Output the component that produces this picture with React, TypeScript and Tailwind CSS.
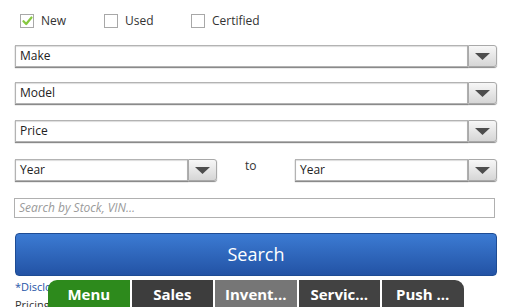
import React from "react";

type CheckProps = { label: string; checked?: boolean; width: string };

function CheckOption({ label, checked, width }: CheckProps) {
  return (
    <div className={`flex items-center ${width}`}>
      <span className="flex h-[14px] w-[14px] items-center justify-center border border-[#a8a8a8] bg-white">
        {checked && (
          <svg width="11" height="10" viewBox="0 0 11 10">
            <path d="M1.5 5.2 L4.2 8 L9.5 1.5" fill="none" stroke="#86c83f" strokeWidth="2.2" strokeLinecap="round" strokeLinejoin="round" />
          </svg>
        )}
      </span>
      <span className="ml-[7px] text-[12px] leading-none text-[#333]">{label}</span>
    </div>
  );
}

function ArrowButton() {
  return (
    <div className="flex h-[22px] w-[29px] shrink-0 items-center justify-center rounded-r-[3px] border border-[#a9a9a9] bg-gradient-to-b from-[#f7f7f7] to-[#d6d6d6] shadow-[0_1px_1px_#8a8a8a]">
      <svg width="15" height="7" viewBox="0 0 15 7">
        <path d="M0 0 H15 L7.5 7 Z" fill="#4d4d4d" />
      </svg>
    </div>
  );
}

function SelectBox({ label, className }: { label: string; className: string }) {
  return (
    <div className={`flex ${className}`}>
      <div className="flex h-[22px] flex-1 items-center border border-[#b3b3b3] bg-white pl-[4px] text-[12px] text-[#222] shadow-[0_1px_1px_#8a8a8a,inset_0_1px_1px_#dcdcdc]">
        {label}
      </div>
      <ArrowButton />
    </div>
  );
}

const tabs = [
  { name: "Menu", bg: "bg-[#2d8a1c]", round: "rounded-tl-[9px]" },
  { name: "Sales", bg: "bg-[#3d3d3d]", round: "" },
  { name: "Invent...", bg: "bg-[#767676]", round: "" },
  { name: "Servic...", bg: "bg-[#424242]", round: "" },
  { name: "Push ...", bg: "bg-[#424242]", round: "rounded-tr-[9px]" },
];

export default function App() {
  return (
    <div className="relative h-[307px] w-[512px] overflow-hidden bg-white font-['Open_Sans',sans-serif]">
      <div className="flex pl-[20px] pt-[14px]">
        <CheckOption label="New" checked width="w-[84px]" />
        <CheckOption label="Used" width="w-[87px]" />
        <CheckOption label="Certified" width="w-[90px]" />
      </div>

      <div className="flex flex-col pl-[15px] pr-[15px] pt-[17px]">
        <SelectBox label="Make" className="" />
        <SelectBox label="Model" className="mt-[15px]" />
        <SelectBox label="Price" className="mt-[16px]" />

        <div className="mt-[17px] flex items-start">
          <SelectBox label="Year" className="w-[202px]" />
          <span className="ml-[28px] mt-[-2px] w-[50px] text-[12px] text-[#333]">to</span>
          <SelectBox label="Year" className="w-[202px]" />
        </div>

        <div className="ml-[-1px] mr-[2px] mt-[17px] flex h-[20px] items-center border border-[#b0b0b0] bg-white pl-[4px] text-[12px] italic text-[#9a9a9a]">
          Search by Stock, VIN...
        </div>

        <button className="mt-[15px] flex h-[43px] items-center justify-center rounded-[4px] border border-[#1e4c94] bg-gradient-to-b from-[#3c7bd3] to-[#2353a5] text-[18px] text-white">
          Search
        </button>

        <div className="mt-[4px] text-[11px] leading-[14px] text-[#1f55a8]">*Disclosure</div>
        <div className="mt-[4px] text-[11px] leading-[14px] text-[#333]">Pricing</div>
      </div>

      <div className="absolute bottom-0 left-[48px] flex h-[27px] gap-[2px]">
        {tabs.map((t) => (
          <div
            key={t.name}
            className={`flex w-[81.5px] items-center justify-center pt-[1px] text-[15px] font-bold text-white ${t.bg} ${t.round}`}
          >
            {t.name}
          </div>
        ))}
      </div>
    </div>
  );
}
